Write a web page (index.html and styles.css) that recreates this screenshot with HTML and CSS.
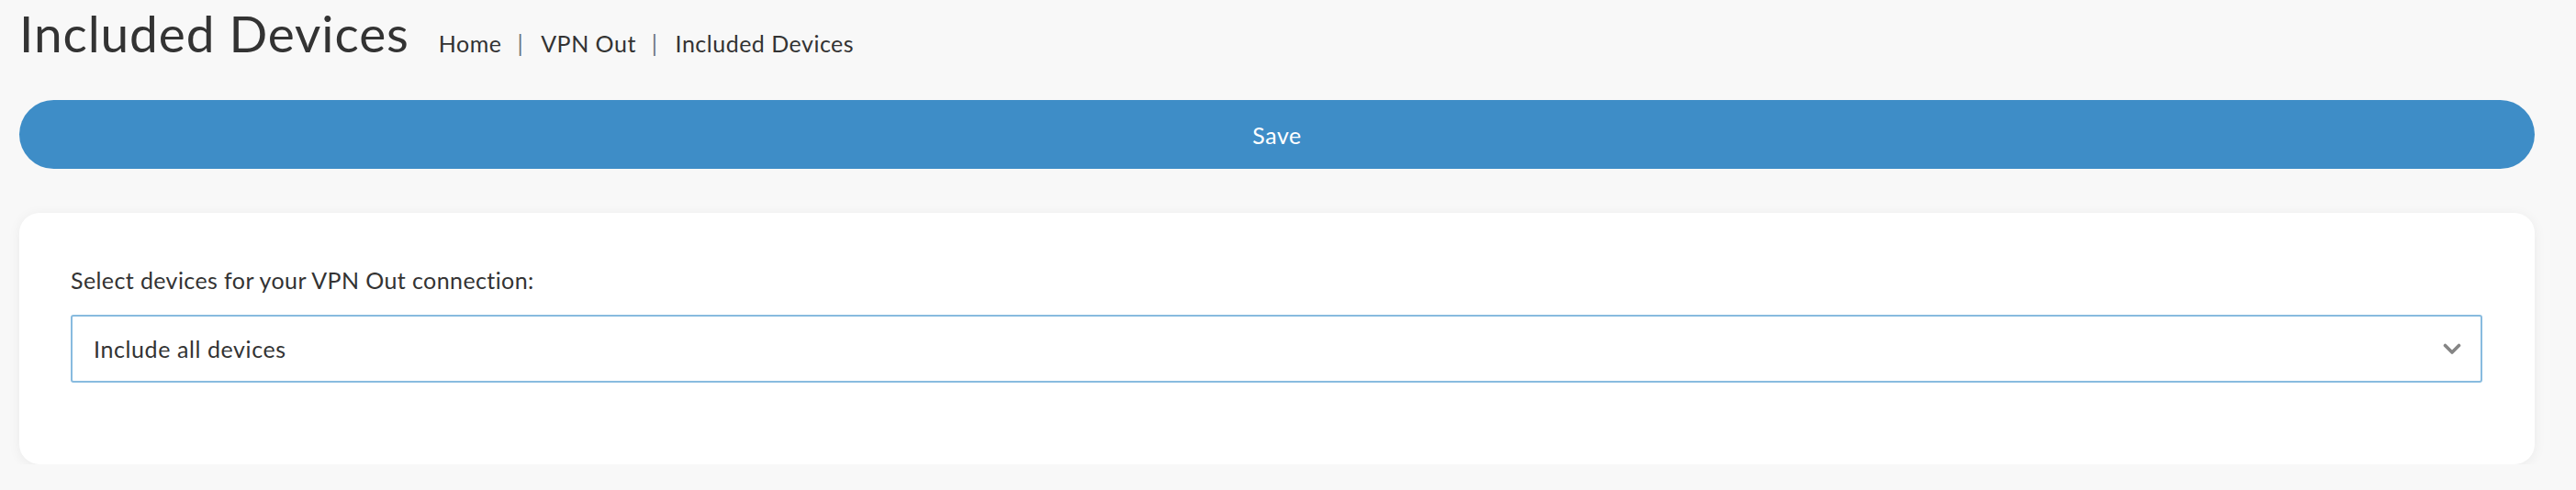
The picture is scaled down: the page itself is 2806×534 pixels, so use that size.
FILE: index.html
```html
<!DOCTYPE html>
<html lang="en">
<head>
<meta charset="utf-8">
<title>Included Devices</title>
<link rel="stylesheet" href="styles.css">
</head>
<body>
<div class="page">
  <header class="page-header">
    <h1 class="page-title">Included Devices</h1>
    <nav class="breadcrumb">
      <span class="crumb">Home</span>
      <span class="sep">|</span>
      <span class="crumb">VPN Out</span>
      <span class="sep">|</span>
      <span class="crumb">Included Devices</span>
    </nav>
  </header>
  <button class="save-btn" type="button">Save</button>
  <section class="card">
    <label class="field-label">Select devices for your VPN Out connection:</label>
    <div class="select">
      <span class="select-value">Include all devices</span>
      <svg class="chevron" width="20" height="13" viewBox="0 0 20 13"><path d="M2.5 2.5 L10 10 L17.5 2.5" fill="none" stroke="#858585" stroke-width="3.6" stroke-linecap="round" stroke-linejoin="round"/></svg>
    </div>
  </section>
</div>
</body>
</html>
```
FILE: styles.css
```css
html, body {
  margin: 0;
  padding: 0;
  background: #f8f8f8;
}
body {
  font-family: "Lato", "Noto Sans", sans-serif;
  color: #333333;
}
.page {
  padding: 3px 45px 0 21px;
}
.page-header {
  display: flex;
  align-items: baseline;
  height: 66px;
}
.page-title {
  margin: 0;
  font-size: 55px;
  font-weight: 400;
  line-height: 66px;
  letter-spacing: 0.9px;
  color: #333333;
}
.breadcrumb {
  display: flex;
  align-items: baseline;
  margin-left: 32px;
  font-size: 25px;
  letter-spacing: 0.5px;
  color: #333333;
}
.sep {
  color: #6c757d;
  margin: 0 19px 0 17px;
}
.save-btn {
  display: block;
  width: 100%;
  height: 75px;
  margin-top: 40px;
  border: none;
  border-radius: 38px;
  background: #3e8dc7;
  color: #ffffff;
  font-family: inherit;
  font-size: 25px;
  letter-spacing: 0.5px;
  padding: 0;
}
.card {
  margin-top: 48px;
  background: #ffffff;
  border-radius: 22px;
  box-shadow: 0 2px 14px rgba(0, 0, 0, 0.06);
  padding: 55px 57px 89px 56px;
}
.field-label {
  display: block;
  font-size: 25px;
  line-height: 36px;
  letter-spacing: 0.4px;
  margin-bottom: 20px;
}
.select {
  box-sizing: border-box;
  height: 74px;
  border: 2px solid #88bbdf;
  border-radius: 3px;
  display: flex;
  align-items: center;
  justify-content: space-between;
  padding: 0 21px 0 23px;
  font-size: 25px;
  letter-spacing: 0.6px;
}
.chevron {
  display: block;
}
```
